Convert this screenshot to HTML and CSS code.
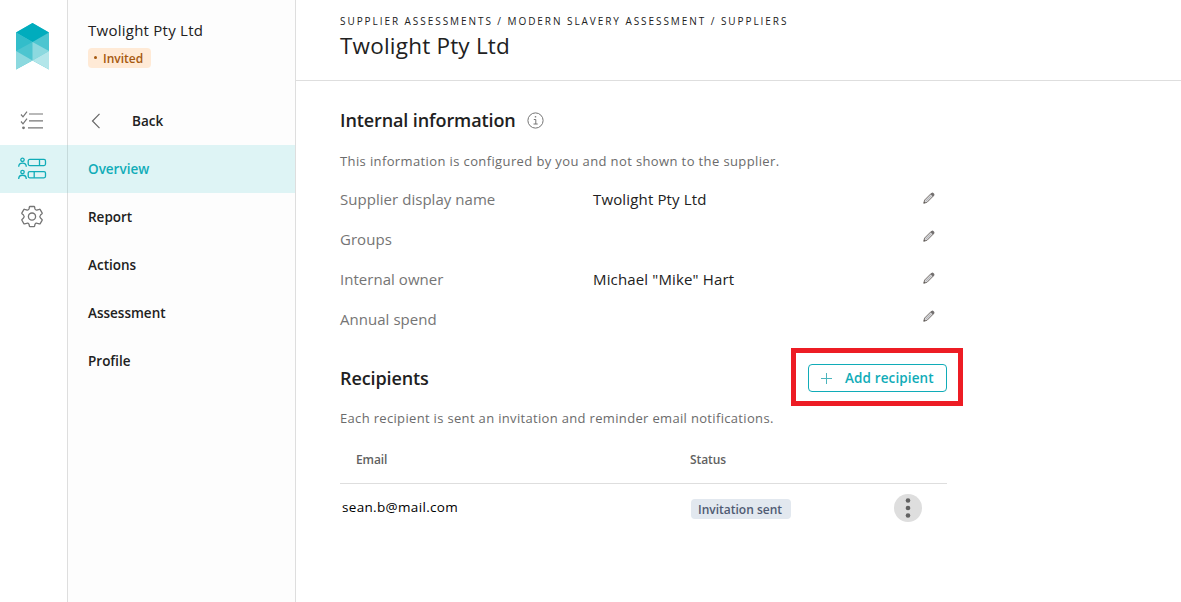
FILE: index.html
```html
<!DOCTYPE html>
<html lang="en">
<head>
    <meta charset="UTF-8">
    <meta name="viewport" content="width=device-width, initial-scale=1.0">
    <title>Twolight Pty Ltd</title>
    <link rel="stylesheet" href="styles.css">
</head>
<body>
    <svg width="0" height="0" class="defs">
        <symbol id="pencil" viewBox="-.8 -.8 15.600 15.600">
            <path d="M1.2 12.8l.9-3.5L9.6 1.8l2.6 2.6-7.5 7.5z" fill="#d5d5d7" stroke="#77716d" stroke-width="1.1"/>
            <path d="M8.7 2.7l1.5-1.5q.8-.7 1.7.2l.8.8q.8.8.1 1.6l-1.5 1.5z" fill="#737070"/>
            <path d="M3.4 10.6L9 5" stroke="#a9adb2" stroke-width=".8"/>
            <path d="M1 13l.6-2.2 1.6 1.6z" fill="#5f5b58"/>
        </symbol>
    </svg>

    <div class="app">
        <nav class="rail">
            <div class="logo">
                <svg width="34" height="47" viewBox="0 0 34 47">
                    <path d="M0 9.500L16.500 0 33 9.500V46.500L16.500 37.500 0 46.500z" fill="#4dc5d0"/>
                    <path d="M16.500 0L33 9.500 16.500 19 0 9.500z" fill="#00acbd"/>
                    <path d="M0 9.500L16.500 19 0 28z" fill="#33bdca"/>
                    <path d="M0 28L16.500 37.500 0 46.500z" fill="#8cd9df"/>
                    <path d="M16.500 19L33 28 16.500 37.500z" fill="#8cd9df"/>
                    <path d="M33 28V46.500L16.500 37.500z" fill="#b3e6ea"/>
                </svg>
            </div>
            <a class="rail-item">
                <svg width="24" height="20" viewBox="0 0 24 20" fill="none" stroke="#757575" stroke-width="1.2">
                    <path d="M1 3.500l2 2.300L7 .7M1 10.500l2 2.300L7 7.700"/>
                    <path d="M9 3h14M9 9.800h14M8 16.800h15"/>
                    <circle cx="3.500" cy="16.800" r=".8" fill="#757575"/>
                </svg>
            </a>
            <a class="rail-item active">
                <svg width="30" height="24" viewBox="0 0 30 24" fill="none" stroke="#10acb8" stroke-width="1.300">
                    <circle cx="5.500" cy="2.800" r="1.700"/>
                    <path d="M1.700 9.800c0-5 7.600-5 7.600 0"/>
                    <rect x="11.200" y="2.400" width="17.300" height="6.200" rx="1.500"/>
                    <path d="M22.500 2.400v6.200"/>
                    <circle cx="5.500" cy="15" r="1.700"/>
                    <path d="M1.700 22c0-5 7.600-5 7.600 0"/>
                    <rect x="11.200" y="14.600" width="17.300" height="6.200" rx="1.500"/>
                    <path d="M17.200 14.600v6.200"/>
                </svg>
            </a>
            <a class="rail-item">
                <svg width="24" height="24" viewBox="0 0 24 24" fill="none" stroke="#757575" stroke-width="1.300" stroke-linejoin="round">
                    <path d="M10 1.500h4q.5 0 .6.500l.4 2q.8 1.600 2.500.9l1.900-.6q.5-.2.800.3l1.900 3.300q.3.500-.1.900l-1.500 1.300q-1.400 1.500 0 3l1.500 1.300q.4.400.1.900l-1.900 3.300q-.3.500-.8.300l-1.900-.6q-1.700-.7-2.500.9l-.4 2q-.1.500-.6.500h-4q-.5 0-.6-.5l-.4-2q-.8-1.600-2.500-.9l-1.900.6q-.5.200-.8-.3l-1.900-3.300q-.3-.5.1-.9l1.500-1.300q1.400-1.500 0-3L2 8.800q-.4-.4-.1-.9l1.900-3.300q.3-.5.8-.3l1.900.6q1.700.7 2.500-.9l.4-2q.1-.5.600-.5z"/>
                    <circle cx="12" cy="11.600" r="3.600"/>
                </svg>
            </a>
        </nav>

        <aside class="sidebar">
            <div class="supplier">
                <div class="supplier-name">Twolight Pty Ltd</div>
                <div class="badge badge-invited"><i class="dot"></i><span>Invited</span></div>
            </div>
            <a class="nav-item back">
                <svg width="10" height="16" viewBox="0 0 10 16" fill="none" stroke="#666" stroke-width="1.200"><path d="M8.500 .8L1.500 8l7 7.200"/></svg>
                <span>Back</span>
            </a>
            <a class="nav-item active">Overview</a>
            <a class="nav-item">Report</a>
            <a class="nav-item">Actions</a>
            <a class="nav-item">Assessment</a>
            <a class="nav-item">Profile</a>
        </aside>

        <main class="main">
            <header class="header">
                <div class="breadcrumb">SUPPLIER ASSESSMENTS / MODERN SLAVERY ASSESSMENT / SUPPLIERS</div>
                <h1>Twolight Pty Ltd</h1>
            </header>

            <div class="content">
                <section class="internal">
                    <div class="section-title">
                        <h2>Internal information</h2>
                        <svg width="17" height="17" viewBox="0 0 17 17" fill="none" stroke="#757575">
                            <circle cx="8.500" cy="8.500" r="7.600"/>
                            <path d="M6.800 7.500h2v4.500M6.500 12h4.200"/>
                            <path d="M7.800 4.800h1.400" stroke-width="1.300"/>
                        </svg>
                    </div>
                    <p class="hint">This information is configured by you and not shown to the supplier.</p>
                    <div class="row">
                        <span class="label">Supplier display name</span>
                        <span class="value">Twolight Pty Ltd</span>
                        <svg class="edit" width="14" height="14"><use href="#pencil"/></svg>
                    </div>
                    <div class="row empty">
                        <span class="label">Groups</span>
                        <span class="value"></span>
                        <svg class="edit" width="14" height="14"><use href="#pencil"/></svg>
                    </div>
                    <div class="row">
                        <span class="label">Internal owner</span>
                        <span class="value">Michael "Mike" Hart</span>
                        <svg class="edit" width="14" height="14"><use href="#pencil"/></svg>
                    </div>
                    <div class="row empty">
                        <span class="label">Annual spend</span>
                        <span class="value"></span>
                        <svg class="edit" width="14" height="14"><use href="#pencil"/></svg>
                    </div>
                </section>

                <section class="recipients">
                    <div class="recipients-head">
                        <h2>Recipients</h2>
                        <div class="highlight">
                            <button class="add">
                                <svg width="11" height="11" viewBox="0 0 11 11" stroke="#4bb5bd" stroke-width="1"><path d="M5.500 0v11M0 5.500h11"/></svg>
                                <span>Add recipient</span>
                            </button>
                        </div>
                    </div>
                    <p class="hint hint-recipients">Each recipient is sent an invitation and reminder email notifications.</p>
                    <div class="table-head">
                        <span>Email</span>
                        <span>Status</span>
                    </div>
                    <div class="table-row">
                        <span class="email">sean.b@mail.com</span>
                        <span class="status"><span class="badge badge-sent">Invitation sent</span></span>
                        <button class="more">
                            <svg width="6" height="20" viewBox="0 0 6 20" fill="#616161"><circle cx="3" cy="2.500" r="2.300"/><circle cx="3" cy="10" r="2.300"/><circle cx="3" cy="17.500" r="2.300"/></svg>
                        </button>
                    </div>
                </section>
            </div>
        </main>
    </div>
</body>
</html>
```
FILE: styles.css
```css
* {
    box-sizing: border-box;
}

body {
    margin: 0;
    font-family: 'Open Sans', 'Noto Sans', sans-serif;
    font-size: 15px;
    color: #212121;
    background: #fff;
    overflow: hidden;
}

h1, h2, p {
    margin: 0;
}

svg {
    display: block;
    flex: none;
}

.defs {
    display: none;
}

.app {
    display: flex;
    height: 602px;
}

.rail {
    width: 68px;
    border-right: 1px solid #dedede;
}

.logo {
    height: 97px;
    padding: 23px 0 0 16px;
}

.rail-item {
    display: flex;
    align-items: center;
    justify-content: center;
    height: 48px;
    padding-right: 3px;
}

.rail-item.active,
.nav-item.active {
    background: #def4f5;
}

.rail-item.active {
    width: 68px;
    border-right: 1px solid #c5dadb;
}

.sidebar {
    width: 228px;
    background: #fdfdfd;
    border-right: 1px solid #dedede;
}

.supplier {
    height: 97px;
    padding: 19px 20px 0;
}

.supplier-name {
    line-height: 22px;
    margin-bottom: 7px;
    letter-spacing: .25px;
}

.badge {
    display: flex;
    align-items: center;
    height: 20px;
    border-radius: 4px;
    font-size: 12px;
    font-weight: 600;
}

.badge-invited {
    width: 63px;
    padding: 1px 0 0 6px;
    gap: 6px;
    background: #ffead6;
    color: #a6590f;
}

.dot {
    width: 3px;
    height: 3px;
    border-radius: 50%;
    background: #a6590f;
    margin-top: -3px;
}

.nav-item {
    display: flex;
    align-items: center;
    height: 48px;
    padding-left: 20px;
    font-size: 13.5px;
    font-weight: 600;
}

.nav-item.active {
    color: #10acb8;
}

.nav-item.back {
    padding-left: 23px;
    gap: 31px;
}

.main {
    flex: 1;
}

.header {
    height: 81px;
    padding: 14px 0 0 44px;
    border-bottom: 1px solid #dedede;
}

.breadcrumb {
    font-size: 10px;
    line-height: 14px;
    letter-spacing: 1.94px;
}

h1 {
    font-size: 22.5px;
    font-weight: 400;
    line-height: 34px;
    letter-spacing: .2px;
    margin-top: 1px;
}

h2 {
    font-size: 18px;
    font-weight: 600;
    line-height: 28px;
    letter-spacing: -.1px;
}

.content {
    width: 607px;
    margin-left: 44px;
    padding-top: 25px;
}

.section-title {
    display: flex;
    align-items: center;
    gap: 11px;
}

.hint {
    font-size: 13px;
    line-height: 20px;
    letter-spacing: .38px;
    margin: 17px 0 8px;
    color: #6b6b6b;
}

.row {
    display: grid;
    grid-template-columns: 253px 1fr 14px;
    height: 40px;
    align-items: center;
    padding-right: 11px;
}

.label {
    color: #757575;
    letter-spacing: .04px;
}

.value {
    letter-spacing: .15px;
}

.edit {
    margin-bottom: 2px;
}

.empty .edit {
    margin-bottom: 6px;
}

.recipients-head {
    display: flex;
    align-items: center;
    justify-content: space-between;
    height: 58px;
    margin: 9px -16px 0 0;
}

.recipients-head h2 {
    padding-top: 2px;
}

.highlight {
    width: 172px;
    height: 58px;
    padding: 11px 12px;
    border: 5px solid #ed1c24;
}

.add {
    display: flex;
    align-items: center;
    width: 139px;
    height: 28px;
    padding: 0 12px;
    gap: 13px;
    border: 1px solid #10acb8;
    border-radius: 4px;
    background: #fff;
    color: #10acb8;
    font: 600 13.5px 'Open Sans', sans-serif;
    letter-spacing: .12px;
    white-space: nowrap;
}

.hint-recipients {
    letter-spacing: .33px;
    margin: 2px 0 0;
}

.table-head {
    display: grid;
    grid-template-columns: 334px 1fr;
    align-items: center;
    height: 56px;
    padding: 8px 16px 0;
    border-bottom: 1px solid #dedede;
    font-size: 12px;
    font-weight: 600;
    letter-spacing: -.1px;
    color: #616161;
}

.table-row {
    display: grid;
    grid-template-columns: 349px 1fr 28px;
    align-items: center;
    height: 48px;
    padding: 0 25px 0 2px;
}

.email {
    font-size: 13.5px;
    letter-spacing: .33px;
    padding-bottom: 2px;
    color: #000;
}

.status {
    display: flex;
    padding-top: 2px;
}

.badge-sent {
    width: 100px;
    padding: 1px 0 0 7px;
    background: #e2e8ef;
    color: #4f5b73;
}

.more {
    display: flex;
    align-items: center;
    justify-content: center;
    width: 28px;
    height: 28px;
    padding: 0;
    border: 0;
    border-radius: 50%;
    background: #dedede;
}
```
